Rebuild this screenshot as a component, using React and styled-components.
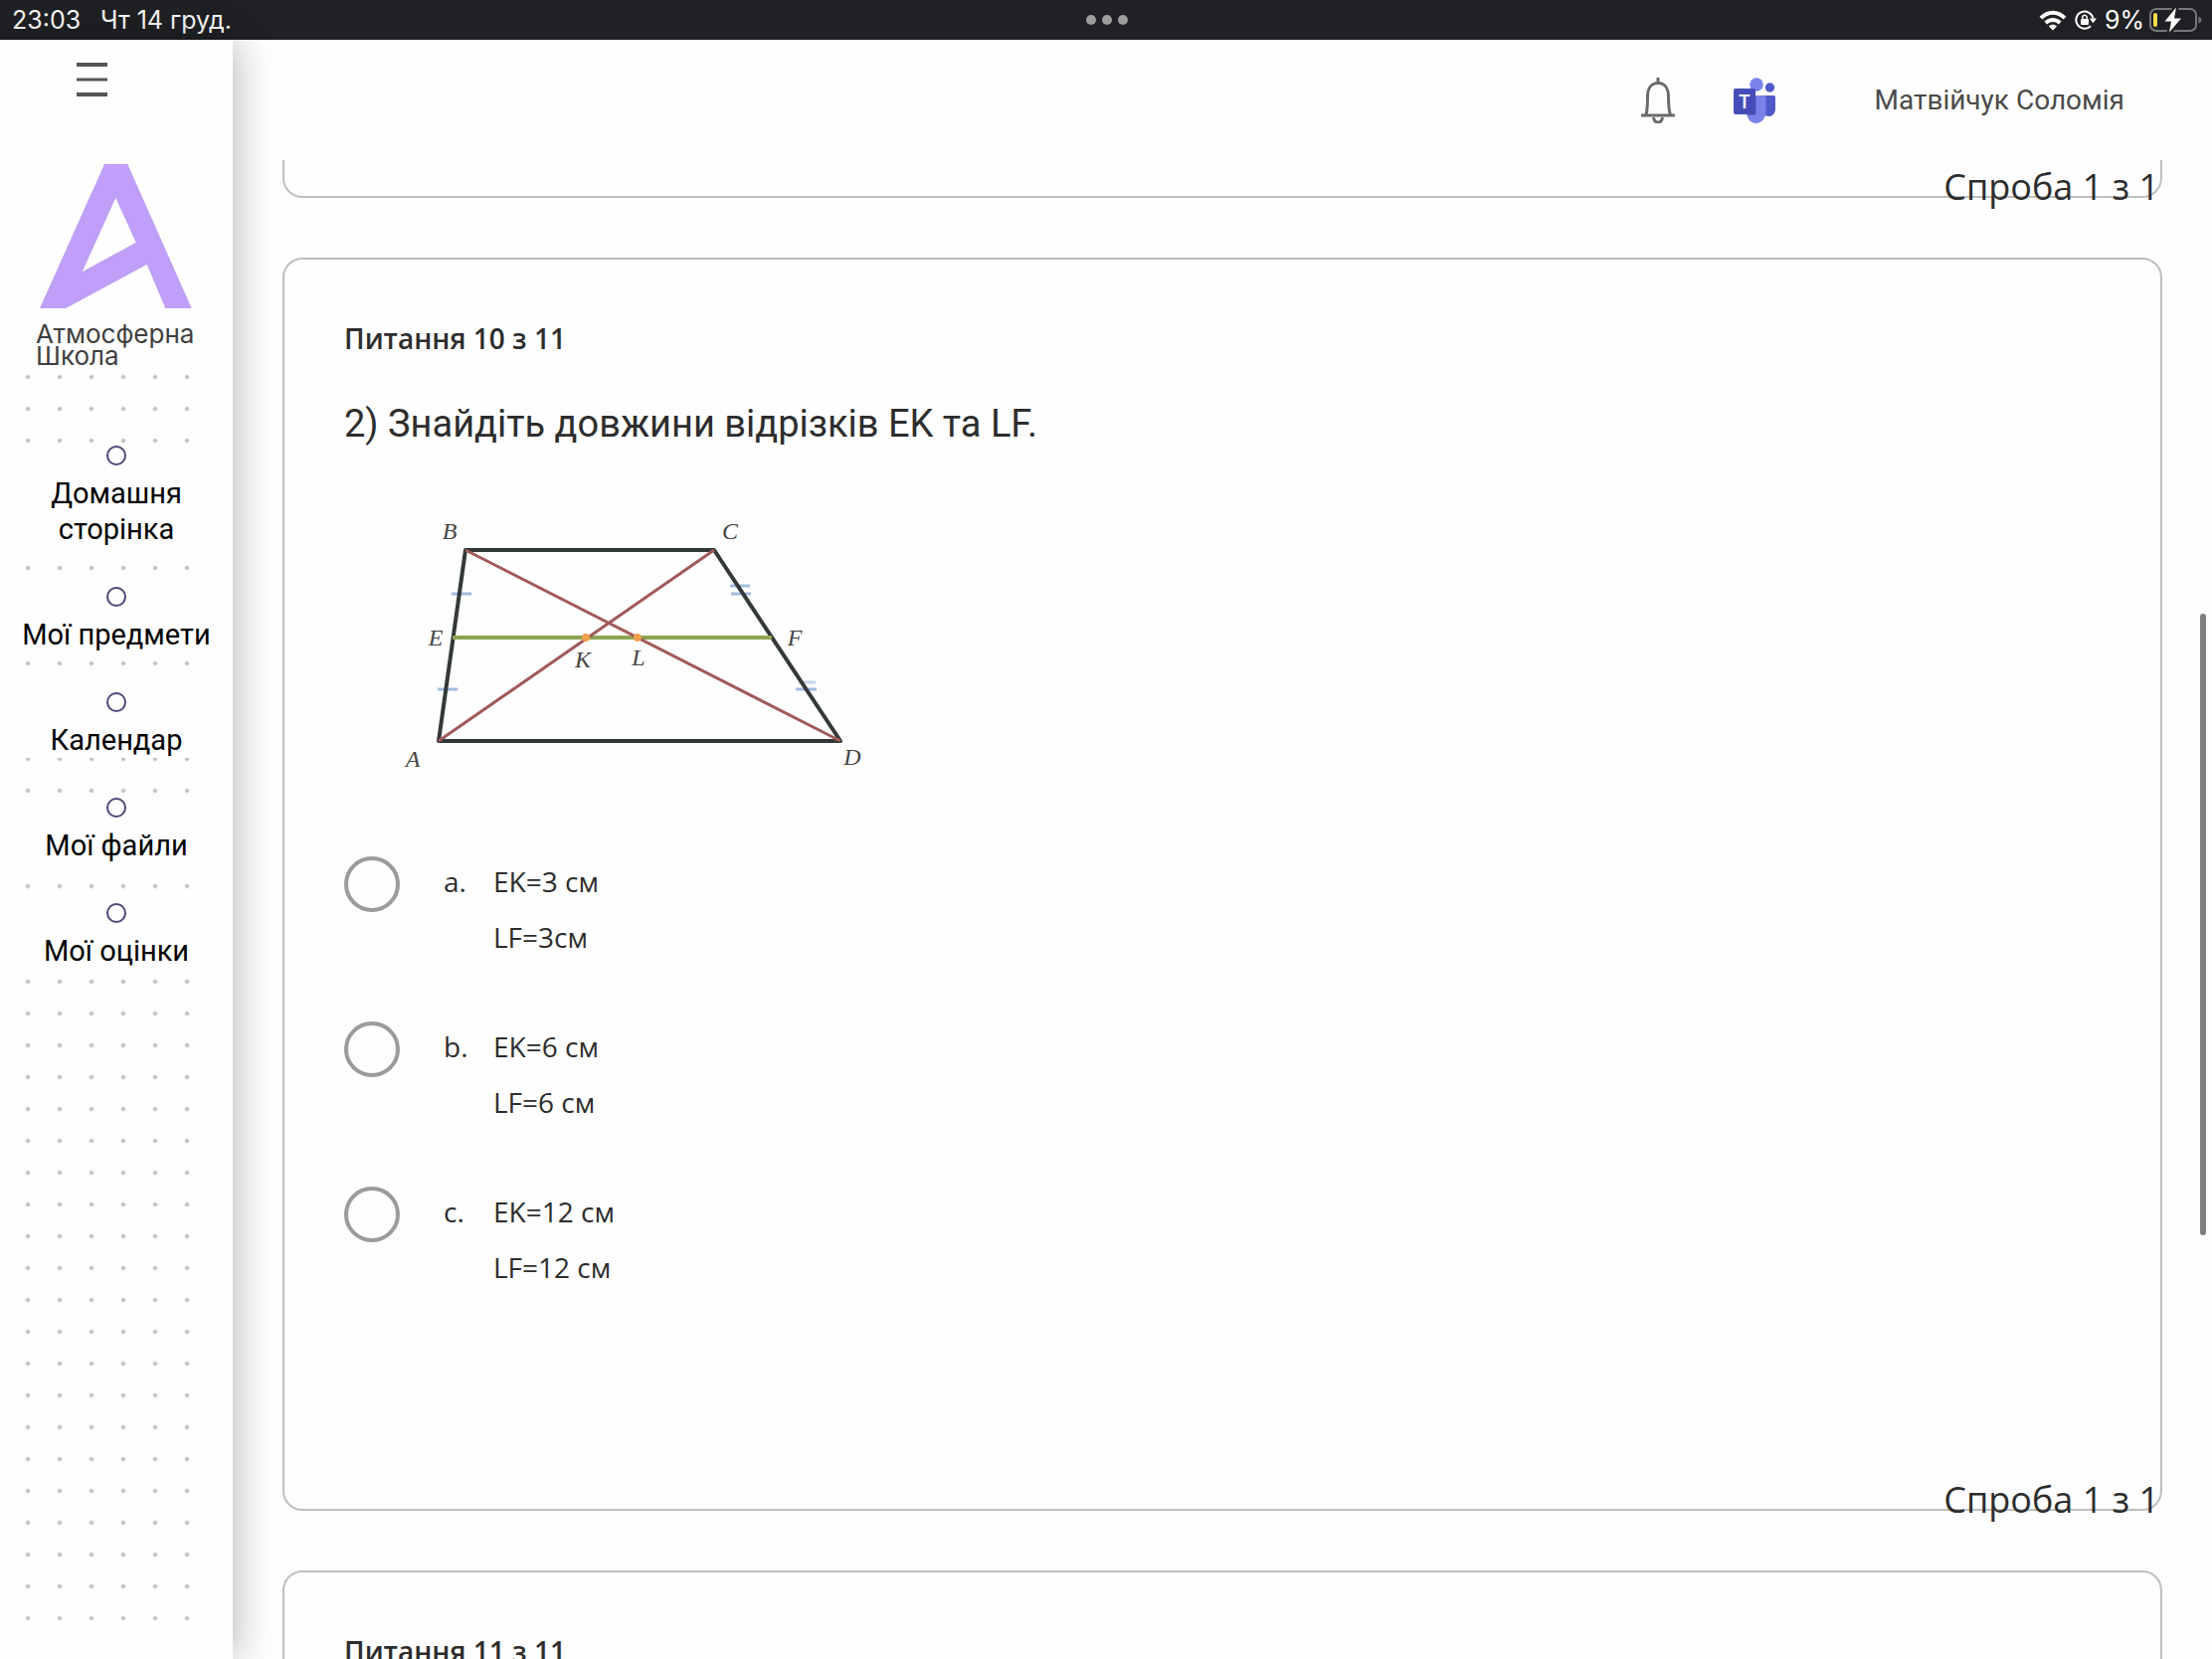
import React, { useState } from 'react'
import styled, { createGlobalStyle } from 'styled-components'

const GlobalStyle = createGlobalStyle`
  *, *::before {
    box-sizing: border-box;
  }
  body {
    margin: 0;
    background: #fefefe;
    color: #2d2d2d;
    font-family: "Open Sans", sans-serif;
  }
`

const Page = styled.div`
  display: flex;
  flex-direction: column;
  height: 100vh;
  overflow: hidden;
`

const StatusBar = styled.div`
  display: grid;
  grid-template-columns: 1fr auto 1fr;
  align-items: center;
  flex: none;
  height: 40px;
  padding: 0 10px 0 12px;
  background: #202124;
  color: #fff;
  font-family: Inter, sans-serif;
  font-size: 25px;
  line-height: 40px;
`

const StatusGroup = styled.div`
  display: flex;
  align-items: center;
  justify-content: ${(props) => (props.$end ? 'flex-end' : 'flex-start')};
  gap: ${(props) => (props.$end ? 8 : 20)}px;
`

const Power = styled.div`
  display: flex;
  align-items: center;
  gap: 5px;
`

const Body = styled.div`
  display: flex;
  flex: 1;
  min-height: 0;
`

const Sidebar = styled.aside`
  position: relative;
  z-index: 1;
  display: flex;
  flex-direction: column;
  flex: none;
  width: 234px;
  padding-bottom: 28px;
  background: #fefefe;
  box-shadow: 0 0 40px rgba(0, 0, 0, 0.32);
`

const MenuButton = styled.button`
  display: flex;
  align-self: flex-start;
  margin: 20px 0 0 72px;
  padding: 0 4px;
  border: 0;
  background: none;
  color: #555;
`

const Logo = styled.a`
  display: flex;
  flex-direction: column;
  margin: 65px 0 0 36px;
  color: #3f3f3f;
  font-family: Inter, sans-serif;
  font-size: 26px;
  line-height: 22px;
  text-decoration: none;
  svg {
    margin: 0 0 15px 4px;
  }
`

const Nav = styled.nav`
  flex: 1;
  margin: 0 16px;
  padding-top: 79px;
  background: radial-gradient(circle at 12px 10px, #bdbdbd 1px, transparent 3px) 0 0 / 32px 32px;
`

const NavList = styled.ul`
  display: flex;
  flex-direction: column;
  gap: 40px;
  margin: 0;
  padding: 0;
  list-style: none;
`

const NavLink = styled.a`
  display: flex;
  flex-direction: column;
  align-items: center;
  gap: 10px;
  background: #fefefe;
  color: #000;
  font-family: Roboto, sans-serif;
  font-size: 29px;
  line-height: 36px;
  text-align: center;
  text-decoration: none;
  &::before {
    content: "";
    width: 20px;
    height: 20px;
    border: 2px solid #4b4779;
    border-radius: 50%;
  }
`

const Main = styled.main`
  display: flex;
  flex-direction: column;
  flex: 1;
  min-width: 0;
`

const Header = styled.header`
  display: flex;
  align-items: center;
  justify-content: flex-end;
  flex: none;
  height: 121px;
  padding-right: 88px;
`

const IconButton = styled.button`
  display: flex;
  margin-right: ${(props) => props.$space}px;
  padding: 0;
  border: 0;
  background: none;
`

const UserLink = styled.a`
  color: #4a4a4a;
  font-family: Roboto, sans-serif;
  font-size: 28px;
  line-height: 36px;
  text-decoration: none;
`

const Feed = styled.div`
  display: flex;
  flex-direction: column;
  gap: 60px;
  flex: 1;
  min-height: 0;
  padding: 0 50px;
  overflow: hidden;
`

const Card = styled.section`
  position: relative;
  flex: none;
  padding: 60px 60px 215px;
  border: 2px solid #bfbfbf;
  border-radius: 20px;
`

const CardTail = styled(Card)`
  height: 38px;
  padding: 0;
  border-top: 0;
  border-radius: 0 0 20px 20px;
`

const Attempt = styled.div`
  position: absolute;
  right: 1px;
  bottom: -16px;
  font-size: 36px;
  line-height: 50px;
`

const Counter = styled.h2`
  margin: 0;
  font-size: 28px;
  font-weight: 600;
  line-height: 38px;
`

const Question = styled.h1`
  margin: 41px 0 48px;
  font-family: Roboto, sans-serif;
  font-size: 38px;
  font-weight: 400;
  line-height: 52px;
`

const Figure = styled.svg`
  display: block;
  margin-bottom: 58px;
  text {
    fill: #444;
    font-family: "Liberation Serif", serif;
    font-size: 24px;
    font-style: italic;
    text-anchor: middle;
  }
`

const Answers = styled.fieldset`
  display: flex;
  flex-direction: column;
  gap: 54px;
  margin: 0;
  padding: 0;
  border: 0;
`

const Answer = styled.label`
  display: flex;
  align-items: flex-start;
  align-self: flex-start;
  font-size: 28px;
  line-height: 56px;
`

const Radio = styled.input`
  appearance: none;
  width: 56px;
  height: 56px;
  margin: 3px 44px 0 0;
  border: 4px solid #9b9b9b;
  border-radius: 50%;
  &:checked {
    background: radial-gradient(#9b9b9b 14px, transparent 15px);
  }
`

const Letter = styled.span`
  width: 50px;
`

const Line = styled.span`
  display: block;
`

const ScrollThumb = styled.div`
  position: fixed;
  top: 37vh;
  right: 6px;
  width: 6px;
  height: 625px;
  border-radius: 3px;
  background: #7f7f7f;
`

const links = ['Домашня сторінка', 'Мої предмети', 'Календар', 'Мої файли', 'Мої оцінки']

const answers = [
  { id: 'a', lines: ['EK=3 см', 'LF=3см'] },
  { id: 'b', lines: ['EK=6 см', 'LF=6 см'] },
  { id: 'c', lines: ['EK=12 см', 'LF=12 см'] },
]

const points = [
  { name: 'B', x: 106, y: 42 },
  { name: 'C', x: 388, y: 42 },
  { name: 'E', x: 92, y: 149 },
  { name: 'F', x: 453, y: 149 },
  { name: 'K', x: 240, y: 171 },
  { name: 'L', x: 296, y: 169 },
  { name: 'A', x: 69, y: 271 },
  { name: 'D', x: 511, y: 269 },
]

const Dots = () => (
  <svg width="42" height="10" viewBox="0 0 42 10" fill="#9d9d9f">
    <circle cx="5" cy="5" r="5" />
    <circle cx="21" cy="5" r="5" />
    <circle cx="37" cy="5" r="5" />
  </svg>
)

const WifiIcon = () => (
  <svg width="28" height="21" viewBox="0 0 28 21" fill="none" stroke="#fff" strokeWidth="4">
    <path d="M2 8.200C9 1 19 1 26 8.200" />
    <path d="M6.800 13C11 9 17 9 21.200 13" />
    <path d="M14 20.500L9.800 16.300C12 14.200 16 14.200 18.200 16.300Z" fill="#fff" stroke="none" />
  </svg>
)

const LockIcon = () => (
  <svg width="22" height="20" viewBox="0 0 22 20" fill="none" stroke="#fff" strokeWidth="2">
    <path d="M16 16.200A8.600 8.600 0 1 1 18.400 8.500" />
    <path d="M14.800 8.500H22L18.400 13.200Z" fill="#fff" stroke="none" />
    <rect x="6" y="9" width="8" height="6" rx="1" fill="#fff" stroke="none" />
    <path d="M7.800 9V7.500a2.200 2.200 0 0 1 4.400 0V9" strokeWidth="1.500" />
  </svg>
)

const BatteryIcon = () => (
  <svg width="53" height="26" viewBox="0 0 53 26">
    <rect x="1" y="2" width="46" height="22" rx="6" fill="none" stroke="#77787a" strokeWidth="2" />
    <path d="M49.500 9.500q3 1.200 3 3.500t-3 3.500z" fill="#77787a" />
    <rect x="4" y="6" width="4" height="14" rx="2" fill="#f5dc4b" />
    <path d="M27 0.500L15.500 14.500H22L20 25.500L32 11.500H25Z" fill="#fff" stroke="#202124" strokeWidth="5" />
    <path d="M27 0.500L15.500 14.500H22L20 25.500L32 11.500H25Z" fill="#fff" />
  </svg>
)

const MenuIcon = () => (
  <svg width="32" height="40" viewBox="0 0 32 40" stroke="currentColor" strokeWidth="4">
    <path d="M1 5H32M1 35H32" />
    <path d="M1 20H32" strokeWidth="3" />
  </svg>
)

const LogoMark = () => (
  <svg width="153" height="145" viewBox="0 0 153 145" fill="#bf9ff8">
    <path
      fillRule="evenodd"
      d="M0 145L65 0H88.300L152.700 145H126.300L107.700 101L26 145ZM76.300 34L42.700 108.300L96.700 78.700Z"
    />
  </svg>
)

const BellIcon = () => (
  <svg width="34" height="46" viewBox="0 0 34 46" fill="none" stroke="#6b6b6b" strokeWidth="3">
    <path d="M17 0V5" />
    <path d="M5 37.500C6.500 32 6.500 26 6.500 19C6.500 10 11 5.500 17 5.500S27.500 10 27.500 19C27.500 26 27.500 32 29.500 37.500" />
    <path d="M0 38H34" />
    <path d="M12.500 40C13 43.500 15 45 17 45S21 43.500 21.500 40" />
  </svg>
)

const TeamsIcon = () => (
  <svg width="42" height="46" viewBox="0 0 42 46">
    <circle cx="36.500" cy="10" r="4.700" fill="#5059c9" />
    <path d="M28 18H40.500Q42 18 42 19.500V31C42 36 39 39 35.500 39C31.500 39 28 36 28 31Z" fill="#5059c9" />
    <circle cx="23" cy="7" r="6.800" fill="#7b83eb" />
    <path d="M13 18H31Q32.500 18 32.500 19.500V34C32.500 41 28 46 22.500 46S13 41 13 34Z" fill="#7b83eb" />
    <path d="M13 18H22.500V36Q22.500 38 20.500 38H14Q13 36 13 34Z" fill="#5a61c4" />
    <rect x="0" y="11" width="22" height="26" rx="2" fill="#464db8" />
    <text x="11" y="31" fill="#fff" textAnchor="middle" fontFamily="Open Sans, sans-serif" fontSize="20" fontWeight="600">
      T
    </text>
  </svg>
)

const Trapezoid = () => (
  <Figure width="560" height="300" viewBox="0 0 560 300" role="img" aria-label="Трапеція ABCD">
    <g stroke="#a3bbdf" strokeWidth="3">
      <path d="M108 97H128M94 193H114M388 89H408M389 97H409M454 193H475" />
      <path d="M457 186H474" opacity="0.600" />
    </g>
    <g fill="none" stroke="#333838" strokeWidth="4" strokeLinejoin="round">
      <path d="M95 245L122 53H372L499 245Z" />
    </g>
    <path d="M109 141H430" stroke="#8fa453" strokeWidth="4" />
    <path d="M95 245L372 53M122 53L499 245" stroke="#a15a5a" strokeWidth="3" />
    <g fill="#f2a14e">
      <circle cx="243" cy="141" r="4" />
      <circle cx="295" cy="141" r="4" />
    </g>
    {points.map((point) => (
      <text key={point.name} x={point.x} y={point.y}>
        {point.name}
      </text>
    ))}
  </Figure>
)

const App = () => {
  const [selected, setSelected] = useState(null)

  return (
    <Page>
      <GlobalStyle />
      <StatusBar>
        <StatusGroup>
          <span>23:03</span>
          <span>Чт 14 груд.</span>
        </StatusGroup>
        <Dots />
        <StatusGroup $end>
          <WifiIcon />
          <LockIcon />
          <Power>
            <span>9%</span>
            <BatteryIcon />
          </Power>
        </StatusGroup>
      </StatusBar>
      <Body>
        <Sidebar>
          <MenuButton aria-label="Меню">
            <MenuIcon />
          </MenuButton>
          <Logo href="#">
            <LogoMark />
            <span>Атмосферна</span>
            <span>Школа</span>
          </Logo>
          <Nav>
            <NavList>
              {links.map((link) => (
                <li key={link}>
                  <NavLink href="#">{link}</NavLink>
                </li>
              ))}
            </NavList>
          </Nav>
        </Sidebar>
        <Main>
          <Header>
            <IconButton $space={59} aria-label="Сповіщення">
              <BellIcon />
            </IconButton>
            <IconButton $space={99} aria-label="Teams">
              <TeamsIcon />
            </IconButton>
            <UserLink href="#">Матвійчук Соломія</UserLink>
          </Header>
          <Feed>
            <CardTail>
              <Attempt>Спроба 1 з 1</Attempt>
            </CardTail>
            <Card>
              <Counter>Питання 10 з 11</Counter>
              <Question>2) Знайдіть довжини відрізків EK та LF.</Question>
              <Trapezoid />
              <Answers>
                {answers.map((answer) => (
                  <Answer key={answer.id}>
                    <Radio
                      type="radio"
                      name="answer"
                      checked={selected === answer.id}
                      onChange={() => setSelected(answer.id)}
                    />
                    <Letter>{answer.id}.</Letter>
                    <span>
                      {answer.lines.map((line) => (
                        <Line key={line}>{line}</Line>
                      ))}
                    </span>
                  </Answer>
                ))}
              </Answers>
              <Attempt>Спроба 1 з 1</Attempt>
            </Card>
            <Card>
              <Counter>Питання 11 з 11</Counter>
            </Card>
          </Feed>
        </Main>
      </Body>
      <ScrollThumb />
    </Page>
  )
}

export default App
